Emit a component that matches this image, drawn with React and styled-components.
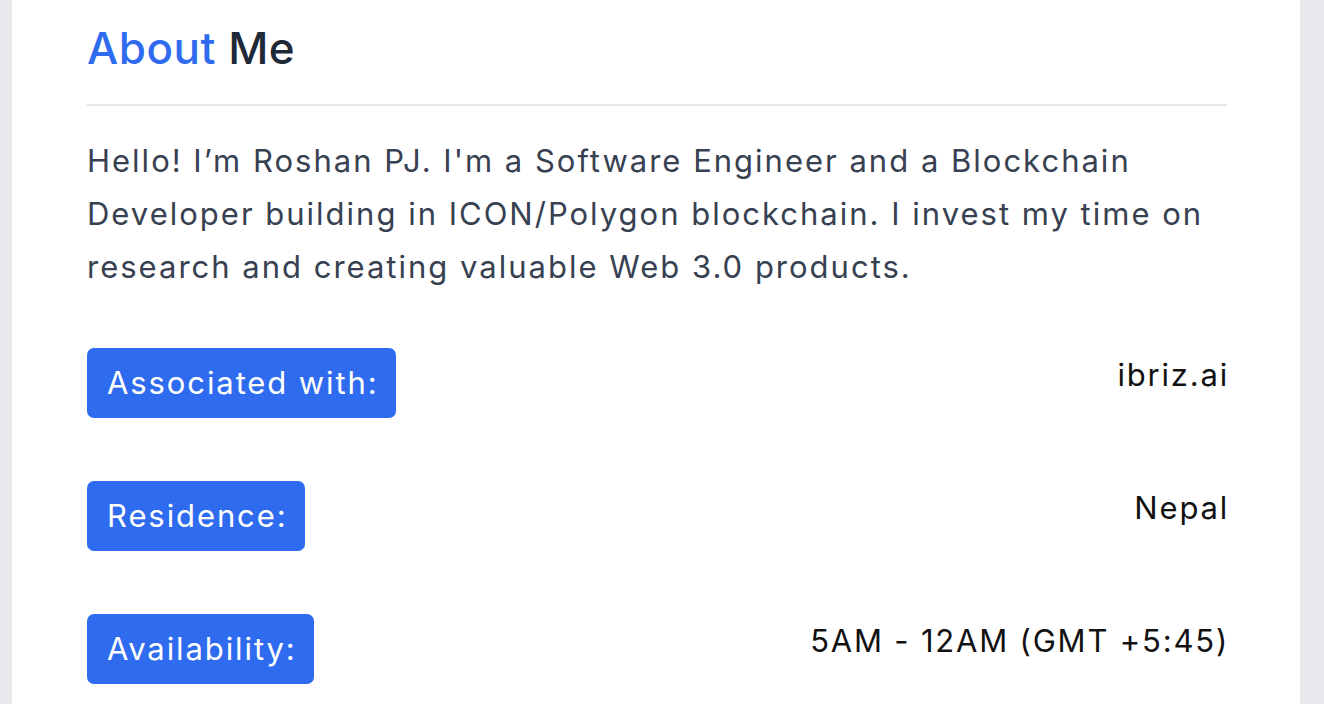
import React from "react";
import styled, { createGlobalStyle } from "styled-components";

const GlobalStyle = createGlobalStyle`
  body {
    margin: 0;
    background: #e7e8eb;
    font-family: Inter, "Noto Sans", sans-serif;
  }
`;

const Page = styled.div`
  padding: 0 24px 0 12px;
  height: 704px;
  overflow: hidden;
`;

const Card = styled.section`
  background: #ffffff;
  height: 100%;
  padding: 21px 73px 0 75px;
  box-sizing: border-box;
`;

const Heading = styled.h2`
  margin: 0;
  font-size: 44px;
  font-weight: 500;
  color: #1f2937;
  line-height: 54px;
  letter-spacing: 0.5px;
  padding-bottom: 29px;
  border-bottom: 2px solid #e5e7eb;

  span {
    color: #2f6bef;
  }
`;

const Bio = styled.p`
  margin: 28px 0 0;
  font-size: 31px;
  line-height: 53px;
  letter-spacing: 2px;
  color: #374151;
`;

const InfoList = styled.div`
  display: flex;
  flex-direction: column;
  gap: 63px;
  margin-top: 55px;
`;

const InfoRow = styled.div`
  display: flex;
  justify-content: space-between;
  align-items: flex-start;
`;

const Badge = styled.span`
  background: #2f6bef;
  color: #ffffff;
  font-size: 31px;
  letter-spacing: 1.9px;
  line-height: 70px;
  height: 70px;
  padding: 0 17px 0 20px;
  border-radius: 7px;
`;

const Value = styled.span`
  color: #111111;
  font-size: 31px;
  letter-spacing: 1.8px;
  line-height: 52px;
  padding-top: 1px;
  margin-right: -2px;
`;

const info = [
  { label: "Associated with:", value: "ibriz.ai" },
  { label: "Residence:", value: "Nepal" },
  { label: "Availability:", value: "5AM - 12AM (GMT +5:45)" },
];

export default function App() {
  return (
    <>
      <GlobalStyle />
      <Page>
        <Card>
          <Heading>
            <span>About</span> Me
          </Heading>
          <Bio>
            Hello! I’m Roshan PJ. I'm a Software Engineer and a Blockchain
            Developer building in ICON/Polygon blockchain. I invest my time on
            research and creating valuable Web 3.0 products.
          </Bio>
          <InfoList>
            {info.map((item) => (
              <InfoRow key={item.label}>
                <Badge>{item.label}</Badge>
                <Value>{item.value}</Value>
              </InfoRow>
            ))}
          </InfoList>
        </Card>
      </Page>
    </>
  );
}
